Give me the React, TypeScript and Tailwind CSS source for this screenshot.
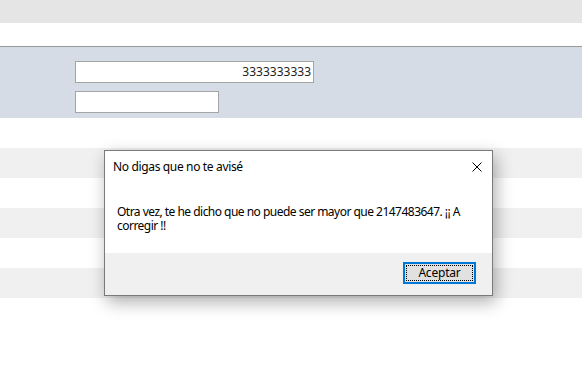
import React from "react";

export default function App() {
  const rows = [false, true, false, true, false, true];
  return (
    <div
      className="relative w-[582px] h-[386px] bg-white overflow-hidden"
      style={{ fontFamily: '"Noto Sans", "Segoe UI", sans-serif' }}
    >
      <div className="h-[23px] bg-[#e5e5e5]" />
      <div className="h-[23px] bg-white" />
      <div className="h-px bg-[#999999]" />
      <div className="h-[71px] bg-[#d5dce5] pl-[75px] pt-[14px] flex flex-col gap-[8px]">
        <div className="w-[239px] h-[22px] bg-white border border-[#a5a5a5] flex items-center justify-end pr-[2px] text-[12px] text-[#222]">
          3333333333
        </div>
        <div className="w-[144px] h-[22px] bg-white border border-[#a5a5a5]" />
      </div>
      {rows.map((g, i) => (
        <div key={i} className={g ? "h-[30px] bg-[#f0f0f0]" : "h-[30px] bg-white"} />
      ))}

      <div className="absolute left-[104px] top-[150px] w-[389px] h-[146px] border border-[#7a7a7a] bg-white flex flex-col shadow-[3px_6px_16px_rgba(0,0,0,0.32)]">
        <div className="h-[32px] flex items-center justify-between pl-[8px] pr-[10px] text-[12px] tracking-[-0.35px] text-black">
          <span>No digas que no te avisé</span>
          <svg width="10" height="10" viewBox="0 0 10 10" className="mt-[-1px]">
            <path d="M0.5 0.5 L9.5 9.5 M9.5 0.5 L0.5 9.5" stroke="#000" strokeWidth="1" />
          </svg>
        </div>
        <div className="h-[70px] pt-[22px] pl-[12px] pr-[6px] text-[12px] leading-[14px] tracking-[-0.52px] text-black">
          <div className="whitespace-nowrap">Otra vez, te he dicho que no puede ser mayor que 2147483647. ¡¡ A</div>
          <div>corregir !!</div>
        </div>
        <div className="flex-1 bg-[#f0f0f0] flex justify-end items-start pt-[9px] pr-[16px]">
          <div className="w-[73px] h-[22px] border-2 border-[#0078d7] bg-[#e1e1e1] p-px">
            <div className="w-full h-full border border-dotted border-black flex items-center justify-center text-[12px] tracking-[-0.2px] text-black">
              Aceptar
            </div>
          </div>
        </div>
      </div>
    </div>
  );
}
